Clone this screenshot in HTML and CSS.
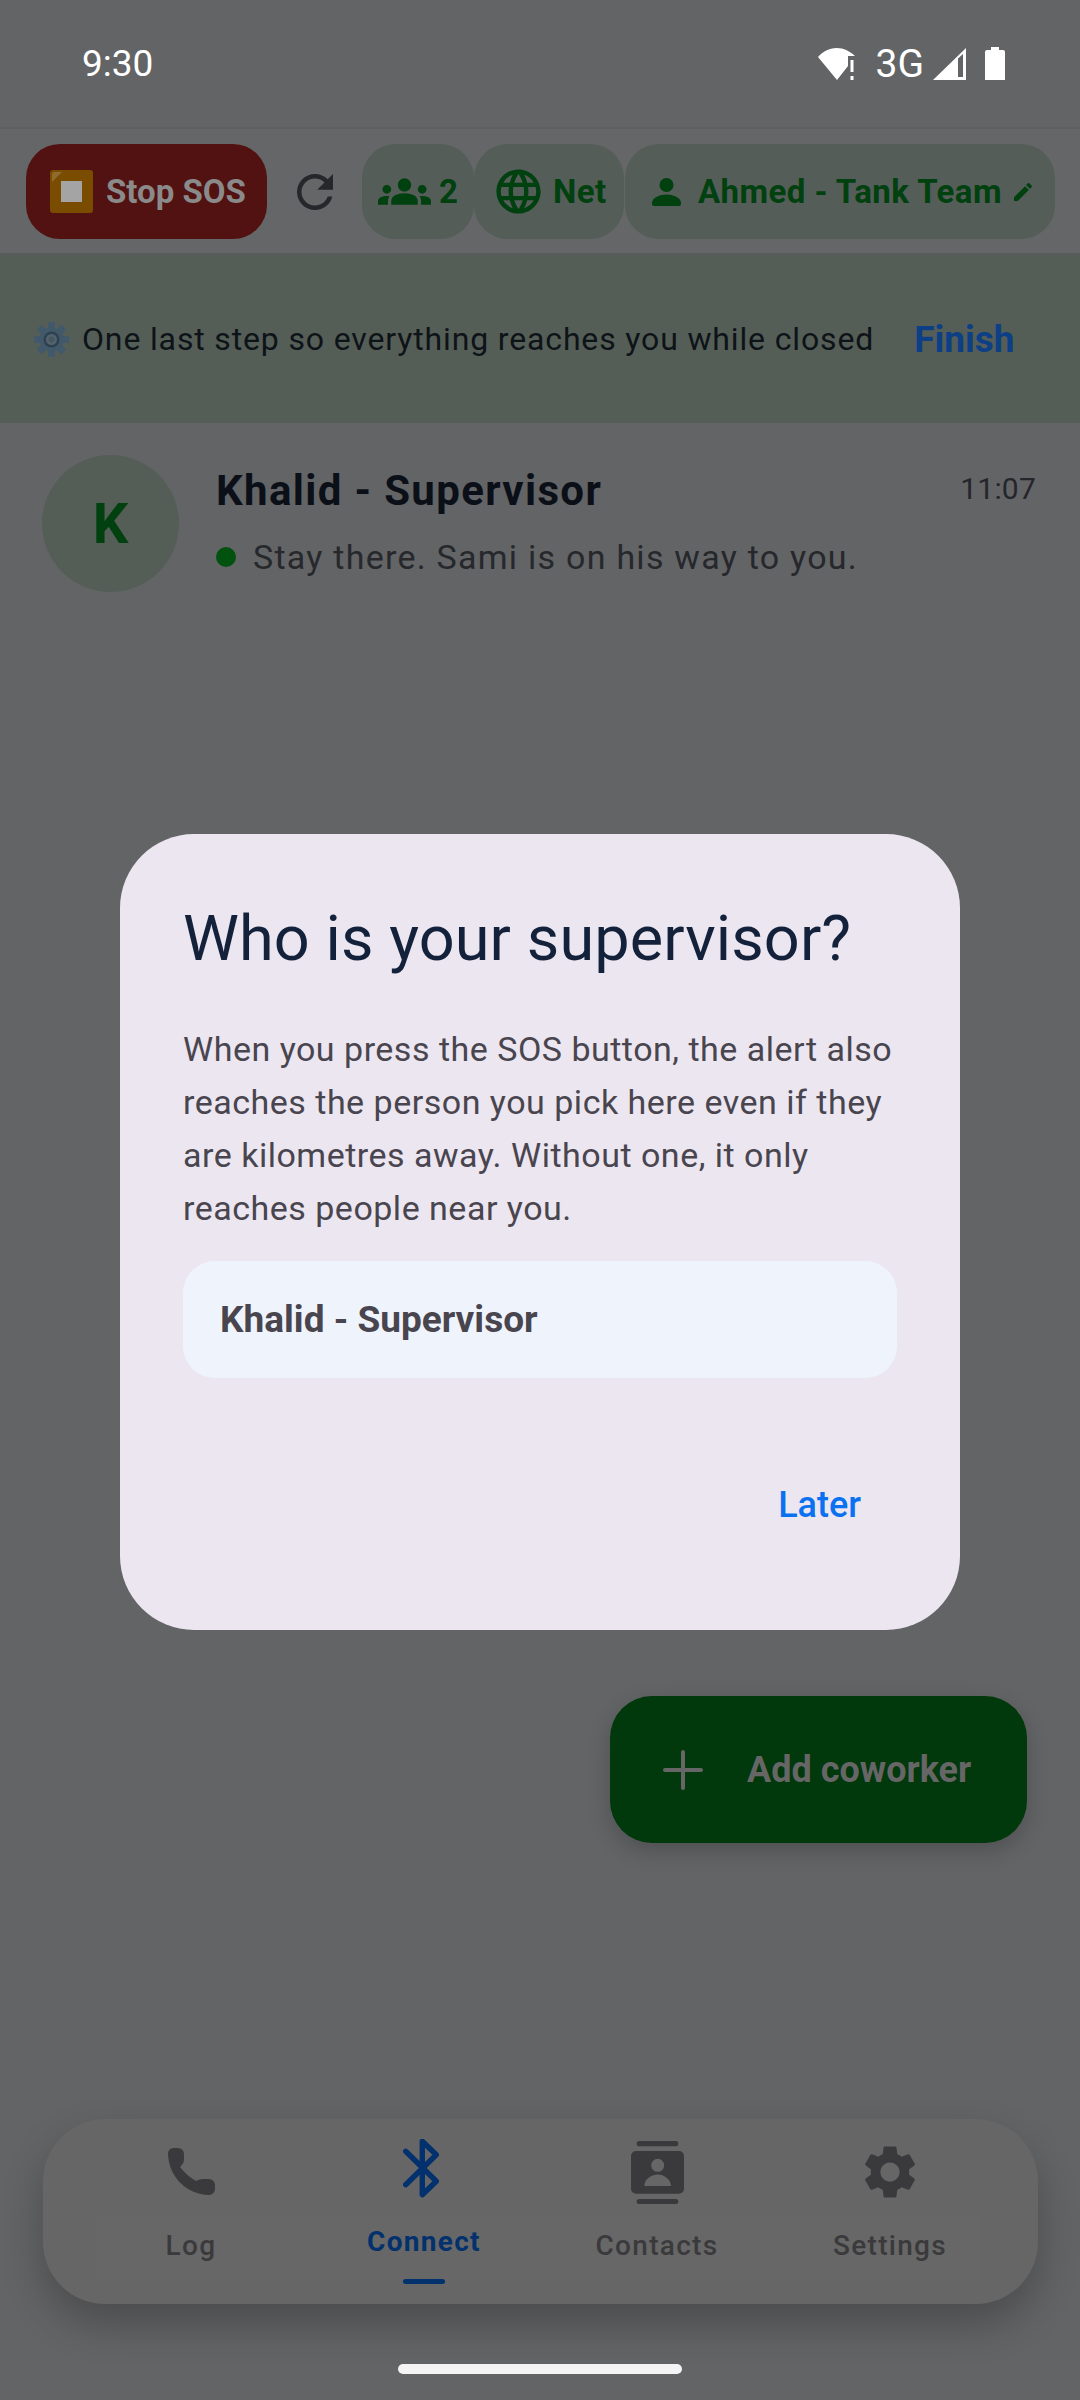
FILE: index.html
```html
<!DOCTYPE html>
<html lang="en">
<head>
<meta charset="utf-8">
<title>Who is your supervisor?</title>
<link rel="stylesheet" href="styles.css">
</head>
<body>
<div class="screen">
  <div class="status">
    <span class="clock">9:30</span>
    <div class="status-icons">
      <svg class="st-wifi" viewBox="0 0 38 32"><path d="M0 9C5 3.500 11 0 18.500 0 26 0 32 3.500 37 8H30V18L19 32Z" fill="#fff"/><path d="M32.500 12h3v12h-3zM32.500 28h3v4h-3z" fill="#fff"/></svg>
      <span class="st-3g">3G</span>
      <svg class="st-signal" viewBox="0 0 33 32"><path d="M0 32 33 0v32zM25 10.500 25 29h5V6z" fill="#fff" fill-rule="evenodd"/></svg>
      <svg class="st-battery" viewBox="0 0 20 33"><path d="M6 0h8v3h4a2 2 0 0 1 2 2v28H0V5a2 2 0 0 1 2-2h4z" fill="#fff"/></svg>
    </div>
  </div>

  <header class="topbar">
    <button class="stop-btn">
      <svg class="stop-emoji" viewBox="0 0 43 43"><rect width="43" height="43" rx="3" fill="#7a4c00"/><path d="M2 12V4a2 2 0 0 1 2-2h8z" fill="#8f6b2e"/><rect x="11" y="11" width="21" height="21" fill="#a4a4a4"/></svg>
      <span>Stop SOS</span>
    </button>
    <button class="refresh">
      <svg viewBox="0 0 24 24" class="refresh-icon"><path d="M17.650 6.350C16.200 4.900 14.210 4 12 4c-4.420 0-7.990 3.580-7.990 8s3.570 8 7.990 8c3.730 0 6.840-2.550 7.730-6h-2.080c-.82 2.330-3.040 4-5.650 4-3.310 0-6-2.690-6-6s2.690-6 6-6c1.660 0 3.140.69 4.220 1.780L13 11h7V4l-2.350 2.350z"/></svg>
    </button>
    <div class="chip chip-people">
      <svg viewBox="0 0 24 24" class="ic-53"><path d="M12 12.750c1.630 0 3.070.39 4.240.9 1.080.48 1.760 1.560 1.760 2.730V18H6v-1.610c0-1.180.68-2.260 1.760-2.730 1.170-.52 2.610-.91 4.240-.91zM4 13c1.100 0 2-.9 2-2s-.9-2-2-2-2 .9-2 2 .9 2 2 2zm1.130 1.100c-.37-.06-.74-.1-1.130-.1-.99 0-1.930.21-2.780.58C.48 14.900 0 15.620 0 16.430V18h4.500v-1.610c0-.83.23-1.610.63-2.290zM20 13c1.100 0 2-.9 2-2s-.9-2-2-2-2 .9-2 2 .9 2 2 2zm4 3.430c0-.81-.48-1.530-1.220-1.850-.85-.37-1.790-.58-2.780-.58-.39 0-.76.04-1.130.1.4.68.63 1.460.63 2.290V18H24v-1.570zM12 6c1.660 0 3 1.340 3 3s-1.340 3-3 3-3-1.340-3-3 1.340-3 3-3z"/></svg>
      <span>2</span>
    </div>
    <div class="chip chip-net">
      <svg viewBox="0 0 24 24" class="ic-53"><path d="M11.990 2C6.470 2 2 6.480 2 12s4.470 10 9.990 10C17.520 22 22 17.520 22 12S17.520 2 11.990 2zm6.930 6h-2.950c-.32-1.250-.78-2.450-1.380-3.560 1.840.63 3.370 1.910 4.330 3.560zM12 4.040c.83 1.200 1.480 2.530 1.910 3.960h-3.820c.43-1.430 1.080-2.760 1.910-3.960zM4.260 14C4.100 13.360 4 12.690 4 12s.1-1.360.26-2h3.380c-.08.66-.14 1.320-.14 2 0 .68.06 1.340.14 2H4.260zm.82 2h2.950c.32 1.250.78 2.450 1.380 3.560-1.840-.63-3.370-1.900-4.330-3.560zm2.950-8H5.080c.96-1.660 2.490-2.930 4.330-3.560C8.810 5.550 8.350 6.750 8.030 8zM12 19.960c-.83-1.200-1.480-2.530-1.910-3.960h3.820c-.43 1.430-1.080 2.760-1.910 3.960zM14.340 14H9.660c-.09-.66-.16-1.320-.16-2 0-.68.07-1.350.16-2h4.680c.09.65.16 1.320.16 2 0 .68-.07 1.340-.16 2zm.25 5.560c.6-1.110 1.060-2.310 1.380-3.560h2.950c-.96 1.650-2.490 2.930-4.330 3.560zM16.360 14c.08-.66.14-1.320.14-2 0-.68-.06-1.340-.14-2h3.380c.16.64.26 1.310.26 2s-.1 1.360-.26 2h-3.380z"/></svg>
      <span>Net</span>
    </div>
    <div class="chip chip-user">
      <svg viewBox="0 0 29 28" class="ic-person"><circle cx="14.500" cy="7" r="7"/><path d="M0 25C0 19.500 8 16.500 14.500 16.500S29 19.500 29 25v1a2 2 0 0 1-2 2H2a2 2 0 0 1-2-2z"/></svg>
      <span>Ahmed - Tank Team</span>
      <svg viewBox="0 0 24 24" class="ic-24"><path d="M3 17.250V21h3.750L17.810 9.940l-3.750-3.750L3 17.250zM20.710 7.040c.39-.39.39-1.020 0-1.410l-2.340-2.340c-.39-.39-1.020-.39-1.410 0l-1.830 1.830 3.750 3.750 1.830-1.830z"/></svg>
    </div>
  </header>

  <section class="banner">
    <svg class="gear-emoji" viewBox="0 0 35 35">
      <g fill="#41596a">
        <rect x="14" width="7" height="35" rx="1"/>
        <rect y="14" width="35" height="7" rx="1"/>
        <rect x="14" width="7" height="35" rx="1" transform="rotate(45 17.500 17.500)"/>
        <rect x="14" width="7" height="35" rx="1" transform="rotate(-45 17.500 17.500)"/>
        <circle cx="17.500" cy="17.500" r="12"/>
      </g>
      <circle cx="17.500" cy="17.500" r="8" fill="#2f4150"/>
      <circle cx="17.500" cy="17.500" r="5.500" fill="#52636f"/>
      <circle cx="17.500" cy="17.500" r="3" fill="#47565f"/>
    </svg>
    <span class="banner-text">One last step so everything reaches you while closed</span>
    <span class="banner-action">Finish</span>
  </section>

  <main class="list">
    <article class="row">
      <div class="avatar">K</div>
      <div class="row-body">
        <div class="row-top">
          <span class="row-name">Khalid - Supervisor</span>
          <span class="row-time">11:07</span>
        </div>
        <div class="row-msg"><i class="dot"></i><span>Stay there. Sami is on his way to you.</span></div>
      </div>
    </article>
  </main>

  <button class="fab">
    <svg viewBox="0 0 40 40" class="fab-plus"><path d="M20 2v36M2 20h36" stroke="#666" stroke-width="4" stroke-linecap="round" fill="none"/></svg>
    <span>Add coworker</span>
  </button>

  <nav class="nav">
    <div class="nav-inner">
      <div class="nav-item">
        <div class="nav-slot">
          <svg viewBox="0 0 47 47" class="ni-phone"><path d="M5.500 0H10a6 6 0 0 1 6 6v6q0 3-3 6l-1 1q7 9 16 14l2-1q3-1 6-1h5a6 6 0 0 1 6 6v4a6 6 0 0 1-6 6C18 46 1 29 0 6A5.500 5.500 0 0 1 5.500 0z"/></svg>
        </div>
        <span>Log</span>
      </div>
      <div class="nav-item active">
        <div class="nav-slot">
          <svg viewBox="0 0 37 59" class="ni-bt"><path d="M2.700 12.300 33.300 42.300 19.300 55.700V2.300L33.300 15.700 2.700 45.700" fill="none" stroke="#03316e" stroke-width="5.400" stroke-linecap="round" stroke-linejoin="round"/></svg>
        </div>
        <span>Connect</span>
        <i class="nav-mark"></i>
      </div>
      <div class="nav-item">
        <div class="nav-slot">
          <svg viewBox="0 0 53 64" class="ni-contacts"><rect x="5.700" y="1" width="41.600" height="5.300" rx="2.600"/><rect x="5.700" y="59" width="41.600" height="5" rx="2.500"/><path fill-rule="evenodd" d="M5 11h43a5 5 0 0 1 5 5v32.700a5 5 0 0 1-5 5H5a5 5 0 0 1-5-5V16a5 5 0 0 1 5-5zM26.700 18.800a6.500 6.500 0 1 0 0 13 6.500 6.500 0 0 0 0-13zM13.300 46H40c0-7-7.500-11.500-13.300-11.500S13.300 39 13.300 46z"/></svg>
        </div>
        <span>Contacts</span>
      </div>
      <div class="nav-item">
        <div class="nav-slot">
          <svg viewBox="0 0 24 24" class="ni-gear"><path d="M19.140 12.940c.04-.3.06-.61.06-.94 0-.32-.02-.64-.07-.94l2.030-1.580c.18-.14.23-.41.12-.61l-1.920-3.320c-.12-.22-.37-.29-.59-.22l-2.390.96c-.5-.38-1.030-.7-1.620-.94l-.36-2.540c-.04-.24-.24-.41-.48-.41h-3.840c-.24 0-.43.17-.47.41l-.36 2.540c-.59.24-1.130.57-1.620.94l-2.390-.96c-.22-.08-.47 0-.59.22L2.740 8.870c-.12.21-.08.47.12.61l2.030 1.580c-.05.3-.09.63-.09.94s.02.64.07.94l-2.030 1.580c-.18.14-.23.41-.12.61l1.920 3.320c.12.22.37.29.59.22l2.390-.96c.5.38 1.030.7 1.620.94l.36 2.540c.05.24.24.41.48.41h3.840c.24 0 .44-.17.47-.41l.36-2.540c.59-.24 1.130-.56 1.620-.94l2.390.96c.22.08.47 0 .59-.22l1.920-3.320c.12-.22.07-.47-.12-.61l-2.010-1.580zM12 15.600c-1.980 0-3.600-1.620-3.600-3.600s1.620-3.600 3.600-3.600 3.600 1.620 3.600 3.600-1.620 3.600-3.600 3.600z"/></svg>
        </div>
        <span>Settings</span>
      </div>
    </div>
  </nav>

  <div class="dialog">
    <h1 class="dlg-title">Who is your supervisor?</h1>
    <p class="dlg-body">When you press the SOS button, the alert also reaches the person you pick here even if they are kilometres away. Without one, it only reaches people near you.</p>
    <div class="dlg-option">Khalid - Supervisor</div>
    <div class="dlg-actions"><span class="dlg-later">Later</span></div>
  </div>

  <div class="home"></div>
</div>
</body>
</html>
```

FILE: styles.css
```css
* { box-sizing: border-box; }
html, body { margin: 0; padding: 0; }
body { font-family: Roboto, "Liberation Sans", sans-serif; background: #636466; }
button { font: inherit; border: 0; padding: 0; background: none; color: inherit; }
svg { display: block; flex: none; }

.screen {
  position: relative;
  width: 1080px;
  height: 2400px;
  overflow: hidden;
  display: flex;
  flex-direction: column;
  background: #636466;
}

/* status bar */
.status {
  height: 127px;
  flex: none;
  padding: 0 75px 0 82px;
  display: flex;
  align-items: center;
  justify-content: space-between;
  color: #fff;
}
.clock { font-size: 37px; }
.status-icons { display: flex; align-items: center; }
.st-wifi { width: 38px; height: 32px; }
.st-3g { font-size: 39px; margin-left: 20px; }
.st-signal { width: 33px; height: 32px; margin-left: 9px; }
.st-battery { width: 20px; height: 33px; margin-left: 19px; }

/* top bar */
.topbar {
  height: 128px;
  flex: none;
  display: flex;
  align-items: center;
  padding-left: 26px;
  padding-top: 1px;
  background: #656667;
  border-top: 2px solid #5e5f60;
  border-bottom: 2px solid #5a5b5c;
  font-size: 33px;
  font-weight: 700;
  letter-spacing: .45px;
}
.stop-btn {
  width: 241px;
  height: 95px;
  border-radius: 34px;
  background: #521211;
  color: #8a8a8a;
  display: flex;
  align-items: center;
  padding-left: 24px;
  gap: 13px;
  font-weight: 700;
  letter-spacing: 0;
}
.stop-emoji { width: 43px; height: 43px; }
.refresh { width: 95px; display: flex; justify-content: center; }
.refresh-icon { width: 54px; height: 54px; fill: #26272b; }
.chip {
  height: 95px;
  border-radius: 34px;
  background: #555d59;
  color: #01400f;
  display: flex;
  align-items: center;
  fill: #01400f;
}
.chip-people { width: 112px; padding-left: 16px; gap: 8px; }
.chip-net { width: 150px; padding-left: 18px; gap: 8px; }
.chip-user { width: 430px; margin-left: 1px; padding-left: 27px; gap: 17px; }
.chip-user .ic-24 { margin-left: -8px; }
.ic-53 { width: 53px; height: 53px; }
.ic-person { width: 29px; height: 28px; }
.ic-24 { width: 24px; height: 24px; }

/* banner */
.banner {
  height: 168px;
  flex: none;
  display: flex;
  align-items: center;
  padding-left: 34px;
  background: #545e57;
}
.gear-emoji { width: 35px; height: 35px; margin-right: 13px; }
.banner-text { font-size: 32px; letter-spacing: .85px; color: #0e1318; white-space: nowrap; }
.banner-action { margin-left: 40px; font-size: 37px; font-weight: 700; color: #0c3f86; }

/* list */
.list { flex: 1; }
.row { display: flex; padding: 32px 44px 0 42px; }
.avatar {
  width: 137px;
  height: 137px;
  flex: none;
  border-radius: 50%;
  background: #545e57;
  color: #01400f;
  font-size: 56px;
  font-weight: 700;
  display: flex;
  align-items: center;
  justify-content: center;
}
.row-body { flex: 1; margin-left: 37px; }
.row-top { display: flex; justify-content: space-between; align-items: center; height: 70px; }
.row-name { font-size: 42px; font-weight: 700; letter-spacing: 1.35px; color: #0b1018; }
.row-time { font-size: 30px; letter-spacing: .2px; color: #24262a; padding-bottom: 4px; }
.row-msg { display: flex; align-items: center; margin-top: 13px; height: 38px; font-size: 34px; letter-spacing: 1.25px; color: #26282c; }
.dot { width: 20px; height: 20px; border-radius: 50%; background: #01520f; margin-right: 17px; }

/* FAB */
.fab {
  align-self: flex-end;
  flex: none;
  width: 417px;
  height: 147px;
  margin-right: 53px;
  margin-bottom: 276px;
  border-radius: 42px;
  background: #01380c;
  color: #666;
  display: flex;
  align-items: center;
  padding-left: 53px;
  gap: 44px;
  font-size: 36px;
  font-weight: 700;
  box-shadow: 0 8px 22px rgba(0, 0, 0, .2);
}
.fab-plus { width: 40px; height: 40px; }

/* nav */
.nav {
  position: relative;
  flex: none;
  height: 185px;
  margin: 0 42px 96px 43px;
  border-radius: 62px;
  background: #666;
  box-shadow: 0 20px 40px rgba(0, 0, 0, .24);
  color: #3a3a3c;
}
.nav::before {
  content: "";
  position: absolute;
  left: 53px;
  right: 57px;
  top: 96px;
  height: 65px;
  background: rgba(255, 255, 255, .01);
}
.nav-inner {
  position: relative;
  display: grid;
  grid-template-columns: repeat(4, 233px);
  justify-content: center;
  height: 100%;
}
.nav-item {
  position: relative;
  display: flex;
  flex-direction: column;
  align-items: center;
  font-size: 28px;
  letter-spacing: 1.3px;
  font-weight: 500;
  fill: #3a3a3c;
}
.nav-slot { height: 105px; display: flex; align-items: center; }
.nav-item span { line-height: 44px; }
.ni-phone { width: 47px; height: 47px; }
.ni-bt { width: 37px; height: 59px; margin-left: -5px; }
.ni-contacts { width: 53px; height: 64px; }
.ni-gear { width: 64px; height: 64px; }
.nav-item.active { color: #03316e; fill: #03316e; font-weight: 700; }
.nav-item.active .nav-slot { height: 99px; }
.nav-item.active span { margin-top: 2px; }
.nav-mark {
  position: absolute;
  top: 160px;
  width: 42px;
  height: 5px;
  border-radius: 3px;
  background: #03316e;
}

/* dialog */
.dialog {
  position: absolute;
  left: 120px;
  top: 834px;
  width: 840px;
  height: 796px;
  padding: 63px;
  border-radius: 74px;
  background: #ece6f0;
}
.dlg-title { margin: 0; font-size: 63px; line-height: 84px; font-weight: 400; letter-spacing: .1px; color: #13213a; }
.dlg-body { margin: 42px 0 0; font-size: 34px; line-height: 53px; letter-spacing: .5px; color: #49454f; }
.dlg-option {
  height: 117px;
  margin-top: 26px;
  padding-left: 37px;
  display: flex;
  align-items: center;
  border-radius: 32px;
  background: #eff4fc;
  color: #49454f;
  font-size: 37px;
  font-weight: 700;
}
.dlg-actions { display: flex; justify-content: flex-end; margin-top: 106px; padding-right: 36px; }
.dlg-later { font-size: 36px; font-weight: 500; color: #0a72f0; }

/* gesture bar */
.home {
  position: absolute;
  left: 398px;
  top: 2364px;
  width: 284px;
  height: 10px;
  border-radius: 5px;
  background: #f4f4f4;
}
```
